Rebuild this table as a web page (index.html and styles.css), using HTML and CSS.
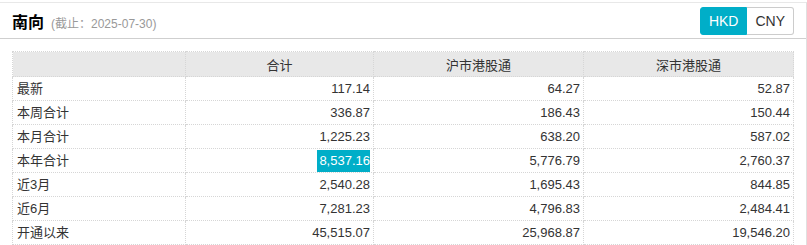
FILE: index.html
```html
<!DOCTYPE html>
<html lang="zh">
<head>
<meta charset="utf-8">
<link rel="stylesheet" href="styles.css">
</head>
<body>
<div class="panel">
  <div class="head">
    <div class="title"><span class="name">南向</span><span class="date">(截止：2025-07-30)</span></div>
    <div class="switch"><span class="btn active">HKD</span><span class="btn">CNY</span></div>
  </div>
  <table class="grid">
    <colgroup><col class="c1"><col class="c2"><col class="c3"><col class="c4"></colgroup>
    <thead><tr><th></th><th>合计</th><th>沪市港股通</th><th>深市港股通</th></tr></thead>
    <tbody>
      <tr><td>最新</td><td class="n">117.14</td><td class="n">64.27</td><td class="n">52.87</td></tr>
      <tr><td>本周合计</td><td class="n">336.87</td><td class="n">186.43</td><td class="n">150.44</td></tr>
      <tr><td>本月合计</td><td class="n">1,225.23</td><td class="n">638.20</td><td class="n">587.02</td></tr>
      <tr><td>本年合计</td><td class="n"><span class="hl">8,537.16</span></td><td class="n">5,776.79</td><td class="n">2,760.37</td></tr>
      <tr><td>近3月</td><td class="n">2,540.28</td><td class="n">1,695.43</td><td class="n">844.85</td></tr>
      <tr><td>近6月</td><td class="n">7,281.23</td><td class="n">4,796.83</td><td class="n">2,484.41</td></tr>
      <tr><td>开通以来</td><td class="n">45,515.07</td><td class="n">25,968.87</td><td class="n">19,546.20</td></tr>
    </tbody>
  </table>
</div>
</body>
</html>
```
FILE: styles.css
```css
html, body { margin: 0; padding: 0; background: #fff; }
body { font-family: "Liberation Sans", Arial, "Noto Sans CJK SC", sans-serif; color: #333; font-size: 13px; overflow: hidden; }
.panel { margin-top: 2px; border-top: 1px solid #e8e8e8; border-right: 1px solid #e0e0e0; }
.head { height: 35px; border-bottom: 1px solid #cfcfcf; display: flex; align-items: center; justify-content: space-between; padding: 0 12px; }
.title { display: flex; align-items: baseline; }
.name { font-size: 16px; font-weight: bold; color: #000; font-family: "Noto Sans CJK SC", sans-serif; }
.date { font-size: 12px; color: #999; margin-left: 7px; }
.switch { display: flex; margin-top: 1px; }
.btn { height: 26px; line-height: 26px; padding: 0 8px; font-size: 14px; border: 1px solid #ccc; background: #fff; color: #333; }
.btn.active { background: #00aec8; border-color: #00aec8; color: #fff; border-radius: 3px 0 0 3px; }
.btn:last-child { border-left: 0; border-radius: 0 3px 3px 0; }
.grid { margin: 12px 0 0 12px; border-collapse: collapse; width: 782px; table-layout: fixed; }
.c1 { width: 173px; } .c2 { width: 188px; } .c3 { width: 210px; } .c4 { width: 210px; }
.grid th, .grid td { border: 1px dotted #d6d6d6; padding: 0 4px; height: 23px; line-height: 23px; font-weight: normal; white-space: nowrap; }
.grid th { background: #e8e8e8; height: 24px; text-align: center; font-family: "Noto Sans CJK SC", sans-serif; font-size: 13px; }
.grid td { font-family: "Liberation Sans", "Noto Sans CJK SC", sans-serif; }
.grid td.n { text-align: right; padding-right: 3px; }
.hl { display: inline-block; background: #00aec8; color: #fff; line-height: 22px; padding-left: 2px; }
```
